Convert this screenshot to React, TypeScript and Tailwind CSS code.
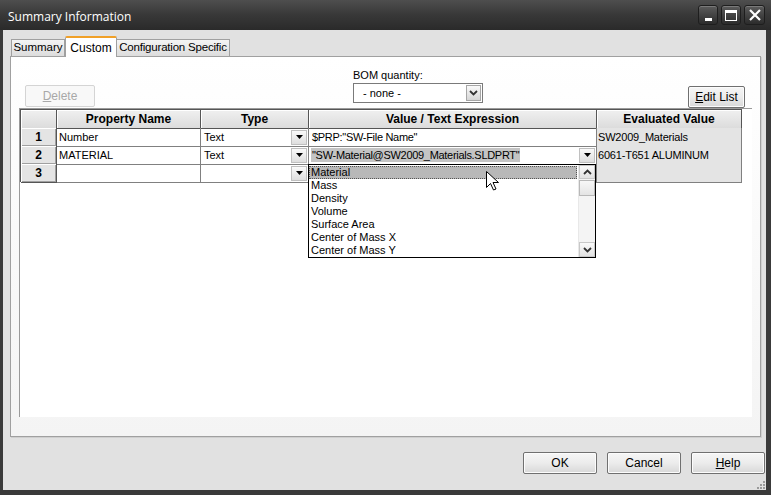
import React from "react";

const font = { fontFamily: '"Liberation Sans", Arial, sans-serif' };

function DropBtn() {
  return (
    <div className="w-[16px] h-[15px] bg-gradient-to-b from-[#fafafa] to-[#dedede] border border-[#c0c0c0] flex items-center justify-center">
      <svg width="7" height="4" viewBox="0 0 7 4"><path d="M0 0h7L3.5 4z" fill="#000" /></svg>
    </div>
  );
}

function Chevron({ up }: { up?: boolean }) {
  return (
    <svg width="9" height="6" viewBox="0 0 9 6">
      <path d={up ? "M1 5L4.5 1.5L8 5" : "M1 1L4.5 4.5L8 1"} stroke="#333" strokeWidth="1.8" fill="none" />
    </svg>
  );
}

function WinBtn({ children }: { children: React.ReactNode }) {
  return (
    <div className="h-[20px] rounded-[3px] border border-[#1e1e1e] bg-gradient-to-b from-[#5c5c5c] to-[#2c2c2c] flex items-center justify-center shadow-[inset_0_1px_0_#7a7a7a]">
      {children}
    </div>
  );
}

function Button({ label, u, w, disabled }: { label: string; u?: number; w: number; disabled?: boolean }) {
  const pre = u === undefined ? label : label.slice(0, u);
  const ch = u === undefined ? "" : label[u];
  const post = u === undefined ? "" : label.slice(u + 1);
  return (
    <div
      className={
        "h-[22px] rounded-[2px] flex items-center justify-center text-[12px] " +
        (disabled
          ? "border border-[#d4d4d4] bg-[#f8f8f8] text-[#a8a8a8]"
          : "border border-[#707070] bg-gradient-to-b from-[#f6f6f6] via-[#ececec] to-[#d8d8d8] text-black shadow-[inset_0_0_0_1px_#fcfcfc]")
      }
      style={{ width: w }}
    >
      {pre}
      {ch && <span className="underline">{ch}</span>}
      {post}
    </div>
  );
}

export default function App() {
  const items = ["Material", "Mass", "Density", "Volume", "Surface Area", "Center of Mass X", "Center of Mass Y"];
  return (
    <div className="w-[771px] h-[495px] bg-[#3a3a3a] flex flex-col overflow-hidden" style={font}>
      {/* Title bar */}
      <div className="h-[30px] flex items-start bg-gradient-to-b from-[#4e4e4e] via-[#383838] to-[#2a2a2a] shrink-0">
        <div className="pl-[8px] pt-[8px] text-white text-[12px]" style={{ fontFamily: '"Open Sans", "Liberation Sans", sans-serif' }}>
          Summary Information
        </div>
        <div className="ml-auto flex gap-[3px] pt-[5px] pr-[6px]">
          <div className="w-[20px]">
            <WinBtn>
              <div className="w-[7px] h-[3px] bg-white mt-[8px]" />
            </WinBtn>
          </div>
          <div className="w-[20px]">
            <WinBtn>
              <div className="w-[12px] h-[11px] border border-white border-t-[3px]" />
            </WinBtn>
          </div>
          <div className="w-[21px]">
            <WinBtn>
              <svg width="12" height="12" viewBox="0 0 12 12"><path d="M1 1L11 11M11 1L1 11" stroke="#fff" strokeWidth="2.2" /></svg>
            </WinBtn>
          </div>
        </div>
      </div>

      {/* Body */}
      <div className="flex-1 ml-[3px] mr-[5px] mb-[5px] bg-[#e1e1e1] flex flex-col relative">
        {/* Tabs */}
        <div className="h-[26px] flex items-end pl-[8px] pt-[6px] text-[11.5px] text-black">
          <div className="w-[54px] h-[17px] border border-b-0 border-[#a0a0a0] bg-gradient-to-b from-[#f4f4f4] to-[#dcdcdc] flex items-center justify-center">Summary</div>
          <div className="w-[52px] h-[21px] -mb-[1px] border border-b-0 border-[#a0a0a0] border-t-[2px] border-t-[#f0a028] rounded-t-[2px] bg-white flex items-center justify-center z-10 text-[12px]">Custom</div>
          <div className="w-[113px] h-[17px] border border-b-0 border-l-0 border-[#a0a0a0] bg-gradient-to-b from-[#f4f4f4] to-[#dcdcdc] flex items-center justify-center tracking-[-0.2px]">Configuration Specific</div>
        </div>

        {/* Panel */}
        <div className="ml-[7px] mr-[5px] h-[381px] border border-[#a0a0a0] bg-gradient-to-b from-white to-[#f4f4f4] flex flex-col shadow-[1px_1px_0_#cfcfcf]">
          {/* controls */}
          <div className="h-[51px] flex items-start pl-[14px] shrink-0">
            <div className="mt-[28px]">
              <Button label="Delete" u={0} w={70} disabled />
            </div>
            <div className="ml-[258px] flex flex-col w-[130px]">
              <div className="text-[11px] mt-[11px] h-[15px] leading-[15px] text-black">BOM quantity:</div>
              <div className="h-[20px] border border-[#7a7a7a] bg-white flex items-center">
                <div className="flex-1 pl-[9px] text-[11px] text-black">- none -</div>
                <div className="w-[15px] h-[16px] mr-[1px] border border-[#a6a6a6] bg-gradient-to-b from-[#fafafa] to-[#d6d6d6] flex items-center justify-center">
                  <Chevron />
                </div>
              </div>
            </div>
            <div className="ml-[205px] mt-[29px]">
              <Button label="Edit List" u={0} w={57} />
            </div>
          </div>

          {/* listview */}
          <div className="ml-[8px] w-[733px] h-[309px] border-l border-t border-[#9a9a9a] bg-white relative shrink-0">
            <div className="w-[722px] text-[11px] text-black border-t border-l border-[#555]">
              {/* header */}
              <div className="grid grid-cols-[36px_144px_108px_288px_145px] h-[18px]">
                {["", "Property Name", "Type", "Value / Text Expression", "Evaluated Value"].map((h, i) => (
                  <div key={i} className="border-r border-b border-[#555] bg-gradient-to-b from-[#f0f0f0] to-[#dcdcdc] shadow-[inset_1px_1px_0_#fff] flex items-center justify-center font-bold text-[12px]">
                    {h}
                  </div>
                ))}
              </div>
              {[
                ["1", "Number", "Text", '$PRP:"SW-File Name"', "SW2009_Materials"],
                ["2", "MATERIAL", "Text", '"SW-Material@SW2009_Materials.SLDPRT"', "6061-T651 ALUMINUM"],
                ["3", "", "", "", ""],
              ].map((r, ri) => (
                <div key={ri} className="grid grid-cols-[36px_144px_108px_288px_145px] h-[18px]">
                  <div className="border-r border-b border-[#555] bg-[#e4e4e4] shadow-[inset_1px_1px_0_#fff,inset_-1px_-1px_0_#a0a0a0] flex items-center justify-center font-bold text-[12px]">{r[0]}</div>
                  <div className="border-r border-b border-[#808080] flex items-center pl-[2px]">{r[1]}</div>
                  <div className="border-r border-b border-[#808080] flex items-center pl-[3px]">
                    <span className="flex-1">{r[2]}</span>
                    <div className="mr-[1px]"><DropBtn /></div>
                  </div>
                  <div className="border-r border-b border-[#808080] flex items-center pl-[2px] tracking-[-0.3px]">
                    {ri === 1 ? (
                      <>
                        <span className="bg-[#c4c4c4] px-[1px] leading-[14px]">{r[3]}</span>
                        <div className="ml-auto mr-[1px]"><DropBtn /></div>
                      </>
                    ) : (
                      <span className="pl-[1px]">{r[3]}</span>
                    )}
                  </div>
                  <div className="border-r border-b border-[#808080] bg-[#e4e4e4] flex items-center pl-[1px] tracking-[-0.2px]">{r[4]}</div>
                </div>
              ))}
            </div>

            {/* dropdown list overlay */}
            <div className="absolute left-[288px] top-[55px] w-[288px] h-[94px] border border-black bg-white flex text-[11px] text-black">
              <div className="flex-1 flex flex-col pt-[1px]">
                {items.map((it, i) => (
                  <div
                    key={it}
                    className={
                      "h-[13px] leading-[13px] pl-[2px] " +
                      (i === 0 ? "bg-[#b8b8b8] outline outline-1 outline-dotted outline-[#555] -outline-offset-1 mr-[1px]" : "")
                    }
                  >
                    {it}
                  </div>
                ))}
              </div>
              <div className="w-[17px] flex flex-col bg-[#f4f4f4] border-l border-[#e8e8e8]">
                <div className="h-[14px] border border-[#c8c8c8] bg-gradient-to-b from-[#fafafa] to-[#e2e2e2] flex items-center justify-center"><Chevron up /></div>
                <div className="h-[16px] mt-[1px] border border-[#b8b8b8] bg-gradient-to-b from-[#f8f8f8] to-[#e4e4e4]" />
                <div className="flex-1" />
                <div className="h-[15px] border border-[#c8c8c8] bg-gradient-to-b from-[#fafafa] to-[#e2e2e2] flex items-center justify-center"><Chevron /></div>
              </div>
            </div>

            {/* mouse cursor */}
            <svg className="absolute left-[466px] top-[62px]" width="13" height="20" viewBox="0 0 13 20">
              <path d="M0.5 0.5V16.5L4.5 12.5L7.5 19L10 18L7 11.5H12.5Z" fill="#fff" stroke="#000" strokeWidth="1" />
            </svg>
          </div>
          <div className="flex-1" />
        </div>

        {/* bottom buttons */}
        <div className="flex justify-end gap-[10px] mt-[15px] mr-[1px]">
          <Button label="OK" w={74} />
          <Button label="Cancel" w={74} />
          <Button label="Help" u={0} w={74} />
        </div>
        {/* resize grip */}
        <svg className="absolute right-[1px] bottom-[1px]" width="10" height="10" viewBox="0 0 10 10">
          {[[8, 2], [8, 5], [5, 5], [8, 8], [5, 8], [2, 8]].map(([x, y], i) => (
            <rect key={i} x={x} y={y} width="2" height="2" fill="#9a9a9a" />
          ))}
        </svg>
      </div>
    </div>
  );
}
